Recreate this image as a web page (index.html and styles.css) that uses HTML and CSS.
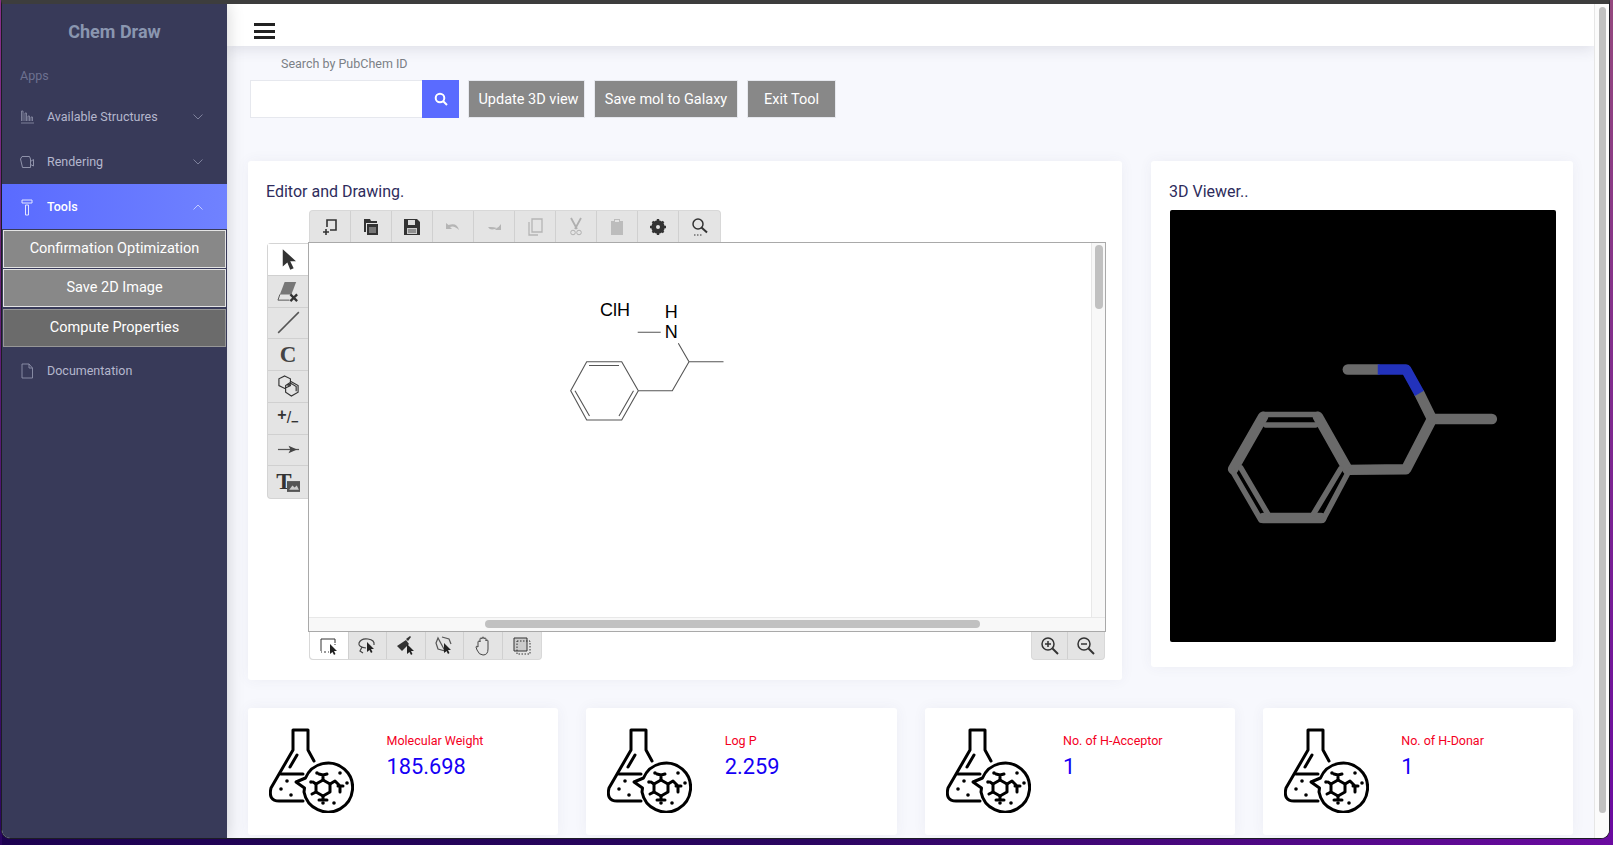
FILE: index.html
```html
<!DOCTYPE html>
<html lang="en">
<head>
    <meta charset="UTF-8">
    <meta name="viewport" content="width=device-width, initial-scale=1.0">
    <title>Chem Draw</title>
    <link rel="stylesheet" href="styles.css">
</head>
<body>
<svg class="defs" width="0" height="0">
    <filter id="soft"><feGaussianBlur stdDeviation=".7"/></filter>
    <symbol id="flask" viewBox="0 0 85 85">
        <g fill="none" stroke="#000" stroke-width="3" stroke-linejoin="round" stroke-linecap="round">
            <path d="M45 33 39 22V2H24V22L2 60Q-1 73 10 73H34"/>
            <path d="M12 46H34"/>
            <path d="M21 39 28 27"/>
            <path d="M36.500 50A24.500 24.500 0 1 1 35 64L35.500 60 27 54Z"/>
            <path d="M54 52 61 56V64L54 68 47 64V56Z"/>
            <path d="M54 52V47M50 46 54 47 58 46M47 56 44 54M47 64 43 66M54 68V72M61 56 66 53 71 58V64M69 58H74M50 72H58"/>
        </g>
        <g fill="#000">
            <circle cx="12" cy="61" r="1.800"/><circle cx="18" cy="53" r="1.800"/><circle cx="22" cy="67" r="1.800"/>
            <circle cx="48" cy="45" r="1.800"/><circle cx="71" cy="45" r="1.800"/><circle cx="42" cy="54" r="1.800"/>
            <circle cx="78" cy="55" r="1.800"/><circle cx="54" cy="75" r="1.800"/><circle cx="65" cy="75" r="1.800"/>
        </g>
    </symbol>
</svg>

<div class="window">
    <aside class="sidebar">
        <div class="brand">Chem Draw</div>
        <div class="side-label">Apps</div>
        <a class="side-item">
            <svg class="side-icon" viewBox="0 0 14 14"><path d="M1 13H14M1.500 11V1H3V11M5 11V3H6.500V11M8 11V6H9.500V11M11 11V7H12.500V11" fill="none" stroke="currentColor" stroke-width=".8"/></svg>
            <span>Available Structures</span>
            <svg class="chevron" viewBox="0 0 10 6"><path d="M.5 .5 5 5 9.500 .5" fill="none" stroke="currentColor"/></svg>
        </a>
        <a class="side-item">
            <svg class="side-icon" viewBox="0 0 14 14"><path d="M2 1.500H9.500L10.500 4V12.500H2.500L.5 4ZM10.500 6.500 13.500 4.500V11L10.500 9.500" fill="none" stroke="currentColor"/></svg>
            <span>Rendering</span>
            <svg class="chevron" viewBox="0 0 10 6"><path d="M.5 .5 5 5 9.500 .5" fill="none" stroke="currentColor"/></svg>
        </a>
        <a class="side-item active">
            <svg class="side-icon" viewBox="0 0 14 14"><path d="M2 0H12V3H2ZM5.500 5H8.500V15H5.500Z" fill="none" stroke="currentColor"/></svg>
            <span>Tools</span>
            <svg class="chevron" viewBox="0 0 10 6"><path d="M.5 5.500 5 1 9.500 5.500" fill="none" stroke="currentColor"/></svg>
        </a>
        <button class="side-btn">Confirmation Optimization</button>
        <button class="side-btn">Save 2D Image</button>
        <button class="side-btn dark">Compute Properties</button>
        <a class="side-item doc">
            <svg class="side-icon" viewBox="0 0 14 14"><path d="M2 0H9L12.500 4V14H2ZM9 0V4H12.500" fill="none" stroke="currentColor" stroke-width=".9"/></svg>
            <span>Documentation</span>
        </a>
    </aside>

    <div class="main">
        <header class="topbar">
            <div class="burger"><span></span><span></span><span></span></div>
        </header>

        <div class="content">
            <div class="search-label">Search by PubChem ID</div>
            <div class="search-row">
                <input class="search-input" type="text">
                <button class="search-btn">
                    <svg width="14" height="14" viewBox="0 0 14 14"><circle cx="6" cy="6" r="4.300" fill="none" stroke="#fff" stroke-width="2"/><path d="M9 9 13 13" stroke="#fff" stroke-width="2"/></svg>
                </button>
                <button class="grey-btn update">Update 3D view</button>
                <button class="grey-btn save">Save mol to Galaxy</button>
                <button class="grey-btn exit">Exit Tool</button>
            </div>

            <div class="panels">
                <section class="card editor-card">
                    <h4>Editor and Drawing.</h4>
                    <div class="editor">
                        <div class="toolbar top-tools">
                            <div class="tool"><svg viewBox="0 0 20 20"><path d="M7 10V3H16V13H10M6 12V18M3 15H9" fill="none" stroke="#333" stroke-width="1.600"/></svg></div>
                            <div class="tool"><svg viewBox="0 0 20 20"><path d="M3 2H9L10 4H16V6H5V15H3Z" fill="#333"/><path d="M6 7H17V18H6Z" fill="#333"/><path d="M8 10H15V16H8Z" fill="#777"/></svg></div>
                            <div class="tool"><svg viewBox="0 0 20 20"><path d="M2 2H15L18 5V18H2Z" fill="#333"/><path d="M6 3H13V8H6Z" fill="#ddd"/><path d="M5 11H15V17H5Z" fill="#ccc"/><path d="M6 13H14M6 15H14" stroke="#555"/></svg></div>
                            <div class="tool off"><svg viewBox="0 0 20 20"><path d="M3 6V12H9L7 10Q11 8 16 13 14 5 5.500 8Z" fill="#b0b0b0"/></svg></div>
                            <div class="tool off"><svg viewBox="0 0 20 20"><path d="M17 7V13H11L13 11Q9 9.500 4 10 7 15 14.500 10Z" fill="#b0b0b0"/></svg></div>
                            <div class="tool off"><svg viewBox="0 0 20 20"><path d="M7 2H17V15H7ZM4 5V18H13" fill="none" stroke="#b0b0b0" stroke-width="1.300"/></svg></div>
                            <div class="tool off"><svg viewBox="0 0 20 20"><path d="M5 1 11 12M15 1 9 12" stroke="#aaa" stroke-width="1.800"/><circle cx="7" cy="15.500" r="2.300" fill="none" stroke="#aaa"/><circle cx="13" cy="15.500" r="2.300" fill="none" stroke="#aaa"/></svg></div>
                            <div class="tool off"><svg viewBox="0 0 20 20"><path d="M4 4H7V2H13V4H16V18H4Z" fill="#b8b8b8"/><path d="M8 3H12V5H8Z" fill="#e4e4e4"/></svg></div>
                            <div class="tool"><svg viewBox="0 0 20 20"><circle cx="10" cy="10" r="5" fill="none" stroke="#333" stroke-width="3.500"/><path d="M10 2V18M2 10H18M4.500 4.500 15.500 15.500M15.500 4.500 4.500 15.500" stroke="#333" stroke-width="2.400"/><circle cx="10" cy="10" r="2" fill="#e4e4e4"/></svg></div>
                            <div class="tool"><svg viewBox="0 0 20 20"><circle cx="8" cy="7" r="5" fill="none" stroke="#333" stroke-width="1.500"/><path d="M11.500 10.500 17 15.500" stroke="#333" stroke-width="2"/><path d="M4 18H5.500M7 18H8.500M10 18H11.500" stroke="#333"/></svg></div>
                        </div>
                        <div class="toolbar left-tools">
                            <div class="tool on"><svg viewBox="0 0 20 20"><path d="M5 1V16L9 12.500 11.500 19 14.500 17.500 11.500 11.500H16.500Z" fill="#333"/></svg></div>
                            <div class="tool"><svg viewBox="0 0 24 24"><path d="M8 2H20L15 15H3Z" fill="#777"/><path d="M3 15 1 21H13" fill="none" stroke="#555"/><path d="M14 15 21 22M21 15 14 22" stroke="#333" stroke-width="2.400"/></svg></div>
                            <div class="tool"><svg viewBox="0 0 20 20"><path d="M1 19 19 1" stroke="#555" stroke-width="1.300"/></svg></div>
                            <div class="tool letter">C</div>
                            <div class="tool"><svg viewBox="0 0 24 24"><path d="M8 1 14 4V11L8 14 2 11V4Z M15 7 22 11V18L15 22 9 18V11Z M11 11 15 9 20 12V17" fill="none" stroke="#333" stroke-width="1.200"/></svg></div>
                            <div class="tool charge"><span class="plus">+</span>/<span class="minus">−</span></div>
                            <div class="tool"><svg viewBox="0 0 24 24"><path d="M1 12H23" stroke="#555" stroke-width="1.300"/><path d="M12 8 21 12 12 16 14 12Z" fill="#444"/></svg></div>
                            <div class="tool text-tool">T<svg viewBox="0 0 12 10"><path d="M0 0H12V10H0Z" fill="#555"/><path d="M2 8 5 4 7 6 9 4 11 8Z" fill="#ccc"/></svg></div>
                        </div>
                        <div class="canvas">
                            <div class="canvas-body">
                                <svg class="sketch" viewBox="310 243 782 374">
                                    <g fill="none" stroke="#555" stroke-width="1.100">
                                        <path d="M571.700 390.700 587.700 361.700H622.700L639.300 390.700 622.700 420H587.700Z"/>
                                        <path d="M590 365.500H620M576 390.700 590.500 416M620 416 634.500 390.700"/>
                                        <path d="M639.300 390.700H673.300L690 361.700H724.500M690 361.700 679.300 343.300M638.700 332.300H661.700"/>
                                    </g>
                                    <text class="atom" x="616" y="315.500">ClH</text>
                                    <text class="atom" x="672.300" y="318">H</text>
                                    <text class="atom" x="672.300" y="337.500">N</text>
                                </svg>
                                <div class="v-track"><div class="v-thumb"></div></div>
                            </div>
                            <div class="h-track"><div class="h-thumb"></div></div>
                        </div>
                        <div class="bottom-tools">
                            <div class="toolbar mode-tools">
                                <div class="tool on"><svg viewBox="0 0 20 20"><path d="M2 15V3H16V7M2 16H3M5 16H7M9 16H10M16 8V9" fill="none" stroke="#333"/><path d="M11 8V18L13.500 16 15 19 16.500 18 15 15H18Z" fill="#222"/></svg></div>
                                <div class="tool"><svg viewBox="0 0 20 20"><path d="M9 12Q1 11 2 7 4 2 11 3 18 4 17 9M5 11 3 15 6 17" fill="none" stroke="#444" stroke-width="1.200"/><path d="M10 6V16L12.500 14 14 17 15.500 16 14 13H17Z" fill="#222"/></svg></div>
                                <div class="tool"><svg viewBox="0 0 20 20"><path d="M1 10 10 4 13 8 6 15Z" fill="#333"/><path d="M10 3 14 0 15 1 12 5Z" fill="#333"/><path d="M11 8V18L13.500 16 15 19 16.500 18 15 15H18Z" fill="#222"/></svg></div>
                                <div class="tool"><svg viewBox="0 0 20 20"><path d="M8 1 15 3 17 8M11 15 4 13 2 7 4 2Z" fill="none" stroke="#555" stroke-width="1.200"/><path d="M10 7V17L12.500 15 14 18 15.500 17 14 14H17Z" fill="#222"/></svg></div>
                                <div class="tool"><svg viewBox="0 0 20 20"><path d="M5 11V6Q5 5 6 5T7 6V3Q7 2 8 2T9 3V2.500Q9 1 10 1T11 2.500V3Q11 2 12 2T13 3V5Q13 4 14 4T15 5V13Q15 19 10 19 6 19 4 14L3 11Q3 9.500 5 11Z" fill="none" stroke="#444"/></svg></div>
                                <div class="tool"><svg viewBox="0 0 20 20"><path d="M2 2H15V15H2Z" fill="#ccc" stroke="#333"/><path d="M5 5H18V18H5Z" fill="none" stroke="#333" stroke-dasharray="1.500 1.500"/></svg></div>
                            </div>
                            <div class="toolbar zoom-tools">
                                <div class="tool"><svg viewBox="0 0 20 20"><circle cx="8" cy="8" r="6" fill="none" stroke="#333" stroke-width="1.500"/><path d="M12.500 12.500 18 18" stroke="#333" stroke-width="2"/><path d="M5 8H11M8 5V11" stroke="#333" stroke-width="1.500"/></svg></div>
                                <div class="tool"><svg viewBox="0 0 20 20"><circle cx="8" cy="8" r="6" fill="none" stroke="#333" stroke-width="1.500"/><path d="M12.500 12.500 18 18" stroke="#333" stroke-width="2"/><path d="M5 8H11" stroke="#333" stroke-width="1.500"/></svg></div>
                            </div>
                        </div>
                    </div>
                </section>

                <section class="card viewer-card">
                    <h4>3D Viewer..</h4>
                    <div class="viewer">
                        <svg viewBox="1170 210 387 432">
                            <g fill="none" stroke="#6a6a6a" stroke-linecap="round" stroke-linejoin="round" filter="url(#soft)">
                                <g stroke-width="10.500">
                                    <path d="M1263.300 416.700 1233.300 469.300M1318.300 416.700 1348.300 470 1406.700 469.300 1432.700 419H1492.700M1263.300 518.300H1321.700"/>
                                    <path d="M1432.700 419 1420 393.300"/>
                                    <path d="M1378.300 369.300H1348.300"/>
                                </g>
                                <g stroke-width="5.500">
                                    <path d="M1263.300 414.500H1318.300M1266 425H1316"/>
                                    <path d="M1231.500 469.300 1261 520M1241 468 1268 514"/>
                                    <path d="M1323.500 520 1350 470M1314 514 1341 469"/>
                                </g>
                                <path d="M1420 393.300 1406.700 369.300H1378.300" stroke="#2233bb" stroke-width="10.500" stroke-linecap="butt"/>
                            </g>
                        </svg>
                    </div>
                </section>
            </div>

            <div class="stats">
                <div class="card stat">
                    <svg class="flask"><use href="#flask"/></svg>
                    <div><div class="stat-name">Molecular Weight</div><div class="stat-value">185.698</div></div>
                </div>
                <div class="card stat">
                    <svg class="flask"><use href="#flask"/></svg>
                    <div><div class="stat-name">Log P</div><div class="stat-value">2.259</div></div>
                </div>
                <div class="card stat">
                    <svg class="flask"><use href="#flask"/></svg>
                    <div><div class="stat-name">No. of H-Acceptor</div><div class="stat-value">1</div></div>
                </div>
                <div class="card stat">
                    <svg class="flask"><use href="#flask"/></svg>
                    <div><div class="stat-name">No. of H-Donar</div><div class="stat-value">1</div></div>
                </div>
            </div>
        </div>
    </div>

    <div class="page-scroll"><div class="page-thumb"></div></div>
</div>
</body>
</html>
```

FILE: styles.css
```css
* {
    box-sizing: border-box;
}
html, body {
    height: 845px;
    overflow: hidden;
}
body {
    margin: 0;
    font-family: Roboto, "Liberation Sans", sans-serif;
    background:
        linear-gradient(180deg, #8a2f8a, #2a0560) left / 2px 100% no-repeat,
        linear-gradient(180deg, #94487e, #6a0aa0) right / 4px 100% no-repeat,
        linear-gradient(90deg, #1c0150 0%, #2a0560 50%, #6a0aa0 100%);
}
.defs {
    position: absolute;
}
.window {
    display: flex;
    height: 839px;
    margin: 0 3px 6px 1px;
    border: 1px solid #1d1d24;
    border-top: 4px solid #3d3d3d;
    border-radius: 0 0 9px 9px;
    overflow: hidden;
    background: #f7f8fd;
}

/* sidebar */
.sidebar {
    flex: none;
    width: 225px;
    background: #383a59;
    box-shadow: 0 0 16px rgba(0, 0, 0, .18);
    z-index: 2;
}
.brand {
    height: 54px;
    line-height: 56px;
    text-align: center;
    font-size: 18px;
    font-weight: 700;
    color: #8a96b0;
}
.side-label {
    height: 18px;
    margin: 9px 0;
    padding-left: 18px;
    font-size: 12.5px;
    line-height: 18px;
    color: #6d7190;
}
.side-item {
    display: flex;
    align-items: center;
    height: 45px;
    padding-left: 18px;
    font-size: 12.5px;
    color: #b5b7cd;
}
.side-item span {
    flex: 1;
    margin-left: 13px;
}
.side-icon {
    width: 14px;
    height: 14px;
    overflow: visible;
    color: #8f92aa;
}
.chevron {
    width: 10px;
    height: 6px;
    margin-right: 24px;
    color: #7e819c;
}
.side-item.active {
    background: linear-gradient(90deg, #5a6bff, #7082ff);
    color: #fff;
    font-weight: 500;
}
.side-item.active .side-icon {
    color: #e3e7ff;
}
.side-item.active .chevron {
    color: #c3cbff;
}
.side-item.doc {
    margin-top: 1px;
}
.side-btn {
    display: block;
    width: 223px;
    height: 38px;
    margin: 1px 1px 0;
    padding: 0 0 2px;
    border: 1px solid #e4e4e4;
    background: #888;
    color: #fff;
    font-family: inherit;
    font-size: 14.5px;
    font-weight: 400;
}
.side-btn.dark {
    margin-top: 2px;
    background: #6b6b6b;
    border-color: #979797;
}

/* main column */
.main {
    flex: none;
    width: 1367px;
    min-width: 0;
}
.topbar {
    height: 42px;
    padding: 19px 0 0 27px;
    background: #fff;
    box-shadow: 0 2px 16px rgba(40, 40, 70, .14);
}
.burger {
    display: flex;
    flex-direction: column;
    gap: 3.5px;
    width: 21px;
}
.burger span {
    height: 3px;
    background: #222;
}
.content {
    padding: 0 21px;
}
.search-label {
    height: 17px;
    margin-top: 9px;
    padding-left: 33px;
    font-size: 12.5px;
    line-height: 17px;
    color: #7b8086;
}
.search-row {
    display: flex;
    height: 38px;
    margin: 8px 0 0 2px;
}
.search-input {
    flex: none;
    width: 172px;
    height: 38px;
    border: 1px solid #e6e8ee;
    border-right: 0;
    background: #fff;
}
.search-btn {
    flex: none;
    width: 37px;
    border: 0;
    padding: 3px 0 0;
    background: #5a6bff;
}
.grey-btn {
    flex: none;
    height: 38px;
    margin-left: 9px;
    padding: 0;
    border: 1px solid #e6e8ee;
    background: #888;
    color: #fff;
    font-family: inherit;
    font-size: 14.5px;
    font-weight: 400;
}
.grey-btn.update {
    width: 117px;
    padding-left: 4px;
}
.grey-btn.save {
    width: 144px;
}
.grey-btn.exit {
    width: 89px;
}
.panels {
    display: grid;
    grid-template-columns: 874px 422px;
    gap: 29px;
    align-items: start;
    margin-top: 43px;
}
.card {
    background: #fff;
    border-radius: 3px;
    box-shadow: 0 0 14px rgba(60, 60, 110, .06);
}
.card h4 {
    margin: 0;
    font-size: 16px;
    font-weight: 400;
    line-height: 20px;
    color: #2e2c5c;
}
.editor-card {
    height: 519px;
    padding: 21px 18px 0 18px;
}
.editor {
    display: grid;
    grid-template-columns: 42px 798px;
    grid-template-rows: 32px 390px 28px;
    margin-top: 8px;
}

/* sketcher toolbars */
.toolbar {
    display: flex;
    background: #e4e4e4;
}
.tool {
    display: flex;
    align-items: center;
    justify-content: center;
    border-right: 1px solid #d0d0d0;
}
.tool svg {
    width: 20px;
    height: 20px;
}
.tool.off svg {
    opacity: .9;
}
.top-tools {
    grid-column: 2;
    width: 412px;
    margin-left: 1px;
    border-radius: 4px 4px 0 0;
    border: 1px solid #d8d8d8;
    border-bottom: 0;
}
.top-tools .tool {
    width: 41px;
}
.top-tools .tool:last-child,
.mode-tools .tool:last-child,
.zoom-tools .tool:last-child {
    border-right: 0;
}
.left-tools {
    grid-column: 1;
    grid-row: 2;
    flex-direction: column;
    width: 41px;
    height: 256px;
    margin: 1px 0 0 1px;
    border: 1px solid #d4d4d4;
    border-right: 0;
    border-radius: 4px 0 0 4px;
}
.left-tools .tool {
    height: 32px;
    border-right: 0;
    border-bottom: 1px solid #d0d0d0;
}
.left-tools .tool svg {
    width: 23px;
    height: 23px;
}
.left-tools .tool:last-child {
    border-bottom: 0;
}
.tool.on {
    background: #fff;
}
.tool.letter {
    font-family: "Liberation Serif", serif;
    font-size: 23px;
    font-weight: 700;
    color: #444;
}
.tool.charge {
    font-family: "Liberation Sans", sans-serif;
    font-size: 16px;
    color: #333;
}
.tool.charge .plus {
    margin: -6px 0 0;
    font-weight: 700;
}
.tool.charge .minus {
    margin: 7px 0 0;
    font-weight: 700;
    font-size: 13px;
}
.tool.text-tool {
    font-family: "Liberation Serif", serif;
    font-size: 23px;
    font-weight: 700;
    color: #333;
}
.left-tools .tool.text-tool svg {
    width: 13px;
    height: 11px;
    margin: 8px 0 0 -5px;
}
.canvas {
    grid-column: 2;
    grid-row: 2;
    display: flex;
    flex-direction: column;
    border: 1px solid #a9a9a9;
    background: #fff;
}
.canvas-body {
    flex: 1;
    display: flex;
    min-height: 0;
}
.sketch {
    flex: 1;
    min-width: 0;
    height: 100%;
}
.atom {
    font-family: "Liberation Sans", sans-serif;
    font-size: 18px;
    text-anchor: middle;
    fill: #000;
}
.v-track {
    flex: none;
    width: 14px;
    padding: 2px 2px 0 3px;
    background: #f8f8f8;
    border-left: 1px solid #e8e8e8;
}
.v-thumb {
    height: 64px;
    background: #c1c1c1;
    border-radius: 5px;
}
.h-track {
    flex: none;
    height: 14px;
    padding: 2px 0 0 176px;
    background: #f8f8f8;
    border-top: 1px solid #e8e8e8;
}
.h-thumb {
    width: 495px;
    height: 8px;
    background: #c1c1c1;
    border-radius: 4px;
}
.bottom-tools {
    grid-column: 2;
    grid-row: 3;
    display: flex;
    justify-content: space-between;
    padding: 0 1px;
}
.mode-tools,
.zoom-tools {
    height: 28px;
    border: 1px solid #d8d8d8;
    border-top: 0;
    border-radius: 0 0 4px 4px;
}
.mode-tools .tool {
    width: 38.5px;
}
.mode-tools .tool.on {
    border-radius: 0 0 0 4px;
}
.zoom-tools .tool {
    width: 36px;
}
.viewer-card {
    height: 506px;
    padding: 21px 16px 0 18px;
}
.viewer {
    height: 432px;
    width: 386px;
    margin: 8px 0 0 1px;
    background: #000;
    border-radius: 2px;
}
.viewer svg {
    display: block;
    width: 100%;
    height: 100%;
}

/* stat cards */
.stats {
    display: grid;
    grid-template-columns: repeat(4, 1fr);
    gap: 28px;
    margin-top: 28px;
}
.stat {
    display: flex;
    height: 127px;
    padding: 20px 20px 20px 21px;
}
.flask {
    flex: none;
    width: 85px;
    height: 85px;
    margin-right: 32.5px;
}
.stat-name {
    margin-top: 4px;
    font-size: 12.5px;
    line-height: 18px;
    color: #f4001e;
}
.stat-value {
    margin-top: 2px;
    font-size: 21.8px;
    line-height: 30px;
    color: #1500f5;
}

/* window scrollbar */
.page-scroll {
    flex: none;
    width: 15px;
    padding: 3px 3px 0 4px;
    background: #fbfbfb;
    border-left: 1px solid #e6e6e6;
}
.page-thumb {
    height: 806px;
    background: #c1c1c1;
    border-radius: 4px;
}
```
